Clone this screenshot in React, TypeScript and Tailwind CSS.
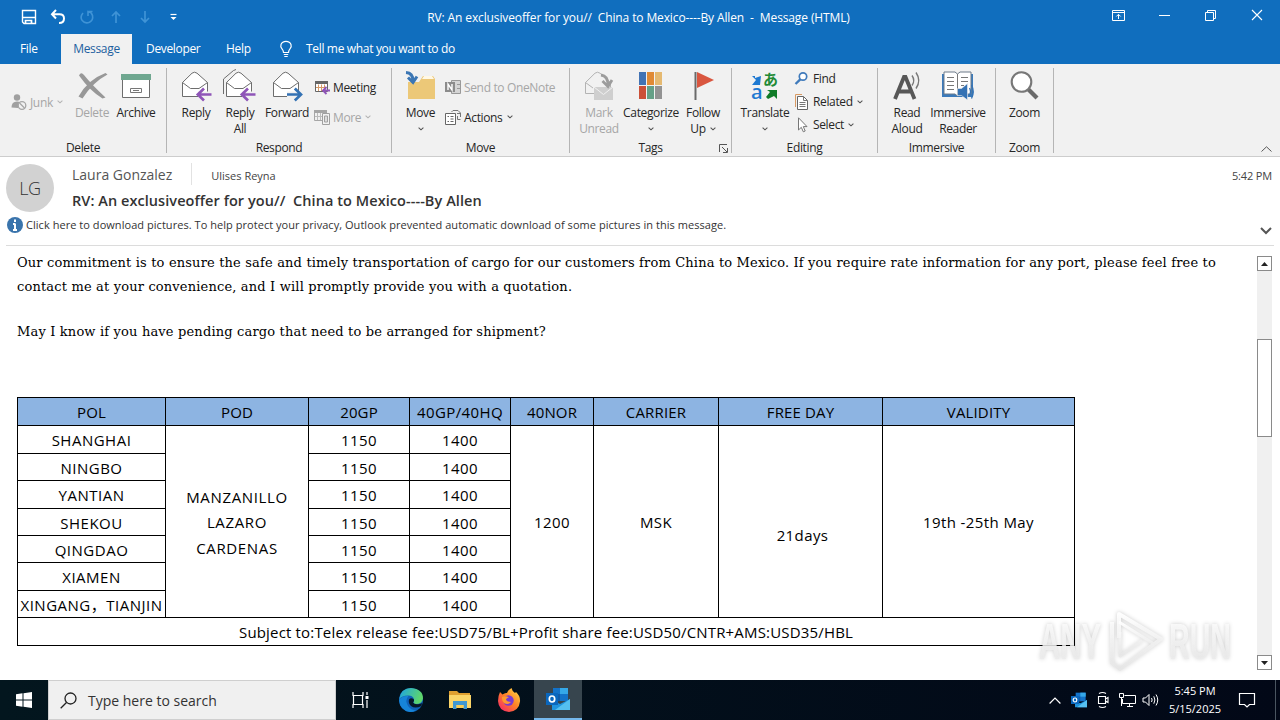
import clsx from 'clsx';
import type { ReactNode } from 'react';

interface BoxProps {
  children: ReactNode;
  className?: string;
}

function Svg({ w, h, children }: { w: number; h: number; children: ReactNode }) {
  return (
    <svg width={w} height={h} viewBox={`0 0 ${w} ${h}`} fill="none" className="block shrink-0 overflow-visible">
      {children}
    </svg>
  );
}

function Caret({ disabled }: { disabled?: boolean }) {
  return (
    <Svg w={6} h={4}>
      <path d="M0.6 0.6L3 2.8L5.4 0.6" stroke={disabled ? '#b4b4b4' : '#555'} strokeWidth="1.1" />
    </Svg>
  );
}

/* ---------- ribbon icons ---------- */

function Envelope() {
  return (
    <>
      <path d="M2.5 12.5L12 3.2Q14.5 1.2 17 3.2L27.5 12.5V26.5H2.5Z" fill="#fff" stroke="#6d6d6d" />
      <path d="M2.5 12.5L10.5 18.5H19L27.5 12.5" stroke="#6d6d6d" />
    </>
  );
}

function ArrowLeft() {
  return (
    <>
      <path d="M32 24.5H18" stroke="#f1f1f1" strokeWidth="6" />
      <path d="M31.5 24.5H18M24 18.5L17.8 24.5L24 30.5" stroke="#8f55b8" strokeWidth="2.7" />
    </>
  );
}

function ReplyIcon() {
  return <Svg w={32} h={32}><Envelope /><ArrowLeft /></Svg>;
}

function ReplyAllIcon() {
  return (
    <Svg w={32} h={32}>
      <path d="M-0.5 24V9L9.500 0.5L12 -0.5" stroke="#6d6d6d" />
      <Envelope />
      <ArrowLeft />
    </Svg>
  );
}

function ForwardIcon() {
  return (
    <Svg w={32} h={32}>
      <Envelope />
      <path d="M16 24.5H30" stroke="#f1f1f1" strokeWidth="6" />
      <path d="M16 24.5H30M23.8 18.5L30 24.5L23.8 30.5" stroke="#3472b4" strokeWidth="2.7" />
    </Svg>
  );
}

function DeleteIcon() {
  return (
    <Svg w={32} h={32}>
      <path d="M3 5.5Q5 1.5 8 5Q16 15 29.5 27.5L26.5 28.5Q14 21 3 5.5Z" fill="#989898" />
      <path d="M31.500 4.500Q17 12 6.500 28.500L2.500 26.500Q12 9.500 29.500 3Z" fill="#989898" />
    </Svg>
  );
}

function ArchiveIcon() {
  return (
    <Svg w={32} h={32}>
      <path d="M2.5 9V27.5H29.5V9" fill="#fff" stroke="#6d6d6d" />
      <path d="M1 4H31V10H1Z" fill="#6fa790" />
      <path d="M10.5 18.5H21.5V22.5H10.5ZM13 20.5H19" stroke="#777" />
    </Svg>
  );
}

function JunkIcon() {
  return (
    <Svg w={16} h={16}>
      <circle cx="6" cy="3.5" r="3.2" fill="#a0a0a0" />
      <path d="M0.5 13.5Q0.5 7.5 6 7.5Q8 7.5 9 8.4L7 14Z" fill="#a0a0a0" />
      <circle cx="11" cy="11.5" r="3.8" fill="#f1f1f1" stroke="#a6a6a6" strokeWidth="1.3" />
      <path d="M8.5 9L13.5 14" stroke="#a6a6a6" strokeWidth="1.3" />
    </Svg>
  );
}

function MeetingIcon() {
  return (
    <Svg w={16} h={16}>
      <path d="M1.5 2.5H13.5V12.5H1.5Z" fill="#fff" stroke="#666" />
      <path d="M1 2H14V5H1Z" fill="#666" />
      <path d="M4.5 5.5V12M7.5 5.5V12M10.5 5.5V9M2 8.5H10" stroke="#d79a68" />
      <path d="M16 11.5H9.5M12.5 8L9 11.5L12.5 15" stroke="#8f55b8" strokeWidth="1.9" />
    </Svg>
  );
}

function MoreIcon() {
  return (
    <Svg w={16} h={16}>
      <path d="M0.5 1.5H12.5V11.5H0.5Z" stroke="#a6a6a6" />
      <path d="M0 1H13V4H0Z" fill="#a6a6a6" />
      <path d="M3.5 4V11M6.5 4V11M1 7.5H8" stroke="#bcbcbc" />
      <path d="M8.5 4.5H15.5V15.5H8.5Z" fill="#f1f1f1" stroke="#a0a0a0" />
      <path d="M10.5 7H13.5V13H10.5Z" fill="#ddd" stroke="#a0a0a0" />
    </Svg>
  );
}

function MoveIcon() {
  return (
    <Svg w={32} h={32}>
      <path d="M3 12H14L18 6H28L30 9V29H3Z" fill="#ecc878" />
      <path d="M19 6H27L29 9H17Z" fill="#fff8e6" />
      <path d="M1 2.5Q8 3 8 11M3 7.5L8 12.5L12 6.5" stroke="#3b76b4" strokeWidth="3" />
    </Svg>
  );
}

function OneNoteIcon() {
  return (
    <Svg w={16} h={16}>
      <path d="M6.5 1.5H15.5V14.5H6.5Z" fill="#d5d5d5" stroke="#999" />
      <path d="M12 5.5H15M12 9.5H15" stroke="#999" />
      <path d="M0 3H10V13H0Z" fill="#8c8c8c" />
      <path d="M3 11V5L7 11V5" stroke="#fff" strokeWidth="1.4" />
    </Svg>
  );
}

function ActionsIcon() {
  return (
    <Svg w={16} h={16}>
      <path d="M0.5 4.5H10.5V15.5H0.5Z" fill="#fff" stroke="#666" />
      <path d="M2.5 7.5H4M2.5 12.5H4M5.5 7.5H8.5M5.5 10H8.5M5.5 12.5H8.5" stroke="#666" />
      <path d="M6.5 3L8 1.5H13L15.5 4V8" stroke="#777" />
      <path d="M12.5 7V10.5H15.5M12 4.5H15" stroke="#777" />
    </Svg>
  );
}

function MarkUnreadIcon() {
  return (
    <Svg w={32} h={32}>
      <path d="M2.5 12.5L12 3.2Q14.5 1.2 17 3.2L27.5 12.5V23.5H2.5Z" stroke="#b3b3b3" />
      <path d="M2.5 12.5L10 18" stroke="#b3b3b3" />
      <path d="M11 17H30V30H11Z" fill="#cfcfcf" />
      <path d="M11 17L20.5 24.5L30 17" stroke="#f1f1f1" />
      <path d="M18 5Q25 6 25 15M19.5 11L25 16.5L29 10" stroke="#9c9c9c" strokeWidth="2.8" />
    </Svg>
  );
}

function CategorizeIcon() {
  return (
    <Svg w={32} h={32}>
      <path d="M4 2H11V15H4Z" fill="#4273b4" />
      <path d="M12 2H19V15H12Z" fill="#e08a35" />
      <path d="M20 2H27V15H20Z" fill="#e5b971" />
      <path d="M4 16H11V29H4Z" fill="#cb5038" />
      <path d="M12 16H19V29H12Z" fill="#65a087" />
      <path d="M20 16H27V29H20Z" fill="#939393" />
    </Svg>
  );
}

function FlagIcon() {
  return (
    <Svg w={32} h={32}>
      <path d="M8.5 2V30" stroke="#6a6a6a" strokeWidth="2" />
      <path d="M10 2L27 10L10 18Z" fill="#d9563f" />
    </Svg>
  );
}

function TranslateIcon() {
  return (
    <Svg w={32} h={32}>
      <path d="M3 6H6V8L12 6L11 15H3L7 10Z" fill="#1e79d2" />
      <text x="2" y="29" fontSize="20" fill="#1e79d2" fontFamily="Open Sans" fontWeight="600">a</text>
      <text x="14" y="15" fontSize="15" fill="#218a35" fontFamily="Noto Sans CJK JP" fontWeight="700">あ</text>
      <path d="M18 20H28V29L25 26L19 29L17 27L21 22Z" fill="#107c28" />
    </Svg>
  );
}

function FindIcon() {
  return (
    <Svg w={16} h={16}>
      <circle cx="9" cy="5.5" r="3.7" fill="#fff" stroke="#3f7abb" strokeWidth="1.7" />
      <path d="M6.3 8.3L1.5 13" stroke="#3f7abb" strokeWidth="2.4" />
    </Svg>
  );
}

function RelatedIcon() {
  return (
    <Svg w={16} h={16}>
      <path d="M1.5 13V0.5H8" stroke="#d99a63" />
      <path d="M3.5 2.5H9.5L13.5 6.5V15.5H3.5Z" fill="#fff" stroke="#666" />
      <path d="M9.5 2.5V6.5H13.5M5.5 8.5H11.5M5.5 10.5H11.5M5.5 12.5H11.5" stroke="#777" />
    </Svg>
  );
}

function SelectIcon() {
  return (
    <Svg w={16} h={16}>
      <path d="M4.5 0.8V13L7.3 10.3L9.3 14.8L11.2 14L9.3 9.6H13Z" fill="#fff" stroke="#777" />
    </Svg>
  );
}

function ReadAloudIcon() {
  return (
    <Svg w={32} h={32}>
      <path d="M4 29L13 7H14.5L23.5 29M7.5 21.5H20" stroke="#575757" strokeWidth="3.8" />
      <path d="M21 5.5Q24.5 10.5 21 15.5M25 2.5Q30.5 10.5 25 18.5" stroke="#777" strokeWidth="1.4" />
    </Svg>
  );
}

function ReaderIcon() {
  return (
    <Svg w={32} h={32}>
      <path d="M0 4H31V27H0Z" fill="#3b7abb" />
      <path d="M2 2H13L15.5 4L18 2H29V24H18L15.5 26L13 24H2Z" fill="#fff" stroke="#6c7b8a" />
      <path d="M15.5 4V25M5 7.5H12M5 11.5H12M5 15.5H12M5 19.5H12M19 7.5H26M19 11.5H26M19 15.5H22" stroke="#777" />
      <path d="M15.5 18.5H19.5L25.5 13.5V30L19.5 25.5H15.5Z" fill="#3472b4" stroke="#f1f1f1" strokeWidth="0.6" />
      <path d="M27.5 18Q29.5 21.5 27.5 25.5M29.5 15Q33 21.5 29.5 28.5" stroke="#3472b4" strokeWidth="1.3" />
    </Svg>
  );
}

function ZoomIcon() {
  return (
    <Svg w={32} h={32}>
      <path d="M19.5 19.5L28 28" stroke="#6a6a6a" strokeWidth="4.2" />
      <circle cx="12.500" cy="12" r="9.800" fill="#fff" stroke="#777" strokeWidth="2.1" />
    </Svg>
  );
}

/* ---------- ribbon parts ---------- */

interface BigProps {
  icon: ReactNode;
  lines: string[];
  className: string;
  caret?: boolean;
  inlineCaret?: boolean;
  disabled?: boolean;
}

function BigButton({ icon, lines, className, caret, inlineCaret, disabled }: BigProps) {
  return (
    <button className={clsx('flex shrink-0 flex-col items-center pt-1.5', disabled && 'text-[#a6a6a6]', className)}>
      {icon}
      <span className="mt-[3px] flex flex-col items-center leading-4 whitespace-nowrap">
        {lines.map((line, i) => (
          <span key={line} className="flex items-center gap-1">
            {line}
            {inlineCaret && i === lines.length - 1 && <Caret />}
          </span>
        ))}
      </span>
      {caret && <span className="mt-1.5"><Caret /></span>}
    </button>
  );
}

interface SmallProps {
  icon: ReactNode;
  label: string;
  className: string;
  caret?: boolean;
  disabled?: boolean;
}

function SmallButton({ icon, label, className, caret, disabled }: SmallProps) {
  return (
    <button className={clsx('flex items-center gap-[3px] whitespace-nowrap', disabled && 'text-[#a6a6a6]', className)}>
      {icon}
      <span className="pt-px">{label}</span>
      {caret && <span className="ml-px"><Caret disabled={disabled} /></span>}
    </button>
  );
}

function Group({ label, className, children, launcher }: BoxProps & { label: string; launcher?: boolean }) {
  return (
    <div className="flex shrink-0">
      <div className={clsx('relative flex flex-col', className)}>
        <div className="flex h-[76px]">{children}</div>
        <div className="text-center leading-[17px]">{label}</div>
        {launcher && (
          <span className="absolute right-[3px] bottom-[3px]">
            <Svg w={9} h={9}>
              <path d="M0.5 8V0.5H8M3 3L8 8M8.5 4V8.5H4" stroke="#555" />
            </Svg>
          </span>
        )}
      </div>
      <div className="mt-1 h-[85px] w-px bg-[#b5b5b5]" />
    </div>
  );
}

function Ribbon() {
  return (
    <div className="flex h-[93px] border-b border-[#cdcdcd] bg-[#f1f1f1] text-xs tracking-[-0.35px] text-[#262626]">
      <Group label="Delete" className="w-[166px]">
        <SmallButton icon={<JunkIcon />} label="Junk" className="mt-[23px] ml-[11px] h-[30px] w-[61px]" caret disabled />
        <BigButton icon={<DeleteIcon />} lines={['Delete']} className="w-10" disabled />
        <BigButton icon={<ArchiveIcon />} lines={['Archive']} className="w-12" />
      </Group>
      <Group label="Respond" className="w-[224px]">
        <BigButton icon={<ReplyIcon />} lines={['Reply']} className="ml-[7px] w-11" />
        <BigButton icon={<ReplyAllIcon />} lines={['Reply', 'All']} className="w-11" />
        <BigButton icon={<ForwardIcon />} lines={['Forward']} className="w-[50px]" />
        <div className="flex flex-col pt-2 pl-0.5">
          <SmallButton icon={<MeetingIcon />} label="Meeting" className="h-[30px]" />
          <SmallButton icon={<MoreIcon />} label="More" className="h-[30px]" caret disabled />
        </div>
      </Group>
      <Group label="Move" className="w-[177px]">
        <BigButton icon={<MoveIcon />} lines={['Move']} className="ml-[5px] w-[47px]" caret />
        <div className="flex flex-col pt-2 pl-px">
          <SmallButton icon={<OneNoteIcon />} label="Send to OneNote" className="h-[30px]" disabled />
          <SmallButton icon={<ActionsIcon />} label="Actions" className="h-[30px]" caret />
        </div>
      </Group>
      <Group label="Tags" className="w-[161px]" launcher>
        <BigButton icon={<MarkUnreadIcon />} lines={['Mark', 'Unread']} className="ml-[7px] w-11" disabled />
        <BigButton icon={<CategorizeIcon />} lines={['Categorize']} className="w-[60px]" caret />
        <BigButton icon={<FlagIcon />} lines={['Follow', 'Up']} className="w-11" inlineCaret />
      </Group>
      <Group label="Editing" className="w-[145px]">
        <BigButton icon={<TranslateIcon />} lines={['Translate']} className="ml-[7px] w-[52px]" caret />
        <div className="flex flex-col pt-[3px] pl-[3px]">
          <SmallButton icon={<FindIcon />} label="Find" className="h-[23px]" />
          <SmallButton icon={<RelatedIcon />} label="Related" className="h-[23px]" caret />
          <SmallButton icon={<SelectIcon />} label="Select" className="h-[23px]" caret />
        </div>
      </Group>
      <Group label="Immersive" className="w-[117px]">
        <BigButton icon={<ReadAloudIcon />} lines={['Read', 'Aloud']} className="ml-1.5 w-[46px]" />
        <BigButton icon={<ReaderIcon />} lines={['Immersive', 'Reader']} className="w-14" />
      </Group>
      <Group label="Zoom" className="w-[57px]">
        <BigButton icon={<ZoomIcon />} lines={['Zoom']} className="w-[57px]" />
      </Group>
      <div className="mr-2 mb-1 ml-auto self-end">
        <Svg w={11} h={6}>
          <path d="M0.5 5.5L5.5 0.8L10.5 5.5" stroke="#555" />
        </Svg>
      </div>
    </div>
  );
}

/* ---------- title bar ---------- */

function TitleBar() {
  return (
    <div className="relative flex h-[34px] items-center justify-between text-white">
      <div className="flex items-center gap-[13px] pl-[21px]">
        <Svg w={16} h={16}>
          <path d="M1.5 1.5H14.5V14.5H3L1.500 13Z" stroke="#fff" strokeWidth="1.4" />
          <path d="M2 8.500H14M4.500 14V11.500H10.500V14" stroke="#fff" strokeWidth="1.700" />
        </Svg>
        <Svg w={16} h={16}>
          <path d="M6 1L2 5.3L6 9.5M2.5 5.3H9.5Q14 5.3 14 9.5Q14 14 9 14" stroke="#fff" strokeWidth="2" />
        </Svg>
        <Svg w={16} h={16}>
          <path d="M4 4Q0.7 8 3.2 11.6Q6 15 10.5 13.3Q14.5 11 13.5 6.5Q12.5 3 9 2.5V7M9 2.5H13.5" stroke="#3f93d6" strokeWidth="1.6" />
        </Svg>
        <Svg w={16} h={16}>
          <path d="M8 14V3M4 7L8 3L12 7" stroke="#3f93d6" strokeWidth="1.7" />
        </Svg>
        <Svg w={16} h={16}>
          <path d="M8 2V13M4 9L8 13L12 9" stroke="#3f93d6" strokeWidth="1.7" />
        </Svg>
        <Svg w={16} h={16}>
          <path d="M4.500 5.5H10.500" stroke="#fff" strokeWidth="1.2" />
          <path d="M4.500 8H10.500L7.500 11Z" fill="#fff" />
        </Svg>
      </div>
      <div className="absolute inset-x-0 pt-px pr-[3px] text-center text-xs tracking-[-0.12px] whitespace-pre">
        {'RV: An exclusiveoffer for you//  China to Mexico----By Allen  -  Message (HTML)'}
      </div>
      <div className="flex items-center pr-[17px] pb-1">
        <Svg w={14} h={11}>
          <path d="M1.5 0.5H13.5V10.5H1.5ZM1.5 2.5H13.5M7.5 9V4.5M5.3 6.5L7.5 4.3L9.7 6.5" stroke="#fff" />
        </Svg>
        <div className="ml-[34px] h-px w-[11px] bg-white" />
        <span className="ml-[35px]">
          <Svg w={11} h={11}>
            <path d="M0.5 2.5H8.5V10.5H0.5ZM2.5 2.5V0.5H10.5V8.5H8.5" stroke="#fff" />
          </Svg>
        </span>
        <span className="ml-[35px]">
          <Svg w={12} h={12}>
            <path d="M1 1L11 11M11 1L1 11" stroke="#fff" strokeWidth="1.1" />
          </Svg>
        </span>
      </div>
    </div>
  );
}

function Tabs() {
  return (
    <div className="flex h-[30px] items-center text-xs tracking-[-0.33px] text-white">
      <span className="w-[61px] pl-5">File</span>
      <span className="flex h-full w-[71px] items-center justify-center bg-[#f1f1f1] text-[#1d5f9f]">Message</span>
      <span className="w-[94px] pl-3.5">Developer</span>
      <span className="w-[53px]">Help</span>
      <Svg w={14} h={18}>
        <path d="M4.5 12.5Q4.5 10.5 3 8.8Q1.2 6.8 2 4.5Q3.2 1.3 7 1.3Q10.8 1.3 12 4.5Q12.8 6.8 11 8.8Q9.5 10.5 9.5 12.5ZM4.8 14.5H9.2M5.3 16.5H8.7" stroke="#fff" strokeWidth="1.2" />
      </Svg>
      <span className="ml-[13px]">Tell me what you want to do</span>
    </div>
  );
}

/* ---------- message ---------- */

function MessageHeader() {
  return (
    <div className="ml-1.5 flex h-[89px] w-[1268px] flex-col border-b border-[#dcdcdc] text-[#444]">
      <div className="flex h-[58px]">
        <div className="mt-[7px] flex size-12 shrink-0 items-center justify-center rounded-full bg-[#d2d2d2] text-lg font-light tracking-tight text-[#333]">
          LG
        </div>
        <div className="ml-[18px] flex flex-col">
          <div className="flex h-[34px] items-center">
            <span className="pt-0.5 text-sm text-[#555]">Laura Gonzalez</span>
            <span className="mx-[19px] h-[22px] w-px bg-[#e2e2e2]" />
            <span className="pt-1 text-[11px]">Ulises Reyna</span>
          </div>
          <div className="text-[14.5px] leading-5 font-semibold tracking-[0.06px] whitespace-pre text-[#333]">
            {'RV: An exclusiveoffer for you//  China to Mexico----By Allen'}
          </div>
        </div>
        <span className="mt-[11px] mr-0.5 ml-auto text-[11px] tracking-[-0.15px]">5:42 PM</span>
      </div>
      <div className="flex items-center">
        <Svg w={18} h={18}>
          <circle cx="9" cy="9" r="8" fill="#3a74ac" />
          <path d="M9 3.5V6M9 7.5V14M7 8H9M7 14H11" stroke="#fff" strokeWidth="2" />
        </Svg>
        <span className="ml-0.5 text-[11px] tracking-[0.045px] text-[#333]">
          Click here to download pictures. To help protect your privacy, Outlook prevented automatic download of some pictures in this message.
        </span>
        <span className="mt-3 mr-0.5 ml-auto">
          <Svg w={12} h={8}>
            <path d="M1 1L6 6L11 1" stroke="#555" strokeWidth="2" />
          </Svg>
        </span>
      </div>
    </div>
  );
}

const HEADS = ['POL', 'POD', '20GP', '40GP/40HQ', '40NOR', 'CARRIER', 'FREE DAY', 'VALIDITY'];
const PORTS: [string, string][] = [
  ['SHANGHAI', 'h-7'],
  ['NINGBO', 'h-[27px]'],
  ['YANTIAN', 'h-7'],
  ['SHEKOU', 'h-[27px]'],
  ['QINGDAO', 'h-[27px]'],
  ['XIAMEN', 'h-7'],
  ['XINGANG，TIANJIN', 'h-[27px]'],
];

function Cell({ children, className, rows }: BoxProps & { rows?: number }) {
  return (
    <td rowSpan={rows} className={clsx('border border-black p-0 text-center', className)}>
      {children}
    </td>
  );
}

function RateTable() {
  return (
    <table className="w-[1058px] table-fixed border-collapse font-['Open_Sans','Noto_Sans_CJK_SC',sans-serif] text-[15px] leading-5 tracking-[0.4px] whitespace-nowrap">
      <colgroup>
        <col className="w-[148px]" />
        <col className="w-[143px]" />
        <col className="w-[101px]" />
        <col className="w-[101px]" />
        <col className="w-[83px]" />
        <col className="w-[125px]" />
        <col className="w-[164px]" />
        <col className="w-[192px]" />
      </colgroup>
      <tbody>
        <tr className="h-7 bg-[#8db4e2]">
          {HEADS.map(h => <Cell key={h} className={h === '40GP/40HQ' ? '' : 'tracking-[0.15px]'}>{h}</Cell>)}
        </tr>
        {PORTS.map(([port, height], i) => (
          <tr key={port} className={height}>
            <Cell className="pt-px tracking-[0.5px]">{port}</Cell>
            {i === 0 && (
              <Cell rows={7} className="pt-[3px] leading-[25.5px] tracking-[0.65px]">
                MANZANILLO<br />LAZARO<br />CARDENAS
              </Cell>
            )}
            <Cell className="pt-px">1150</Cell>
            <Cell className="pt-px">1400</Cell>
            {i === 0 && (
              <>
                <Cell rows={7}>1200</Cell>
                <Cell rows={7}>MSK</Cell>
                <Cell rows={7} className="pt-[27px] pl-1">21days</Cell>
                <Cell rows={7}>19th -25th May</Cell>
              </>
            )}
          </tr>
        ))}
        <tr className="h-7">
          <td colSpan={8} className="border border-black p-0 text-center tracking-[0.17px]">
            Subject to:Telex release fee:USD75/BL+Profit share fee:USD50/CNTR+AMS:USD35/HBL
          </td>
        </tr>
      </tbody>
    </table>
  );
}

function ScrollButton({ down }: { down?: boolean }) {
  return (
    <div className="flex size-[15px] items-center justify-center border border-[#8a8a8a] bg-white">
      <Svg w={7} h={4}>
        <path d={down ? 'M0 0H7L3.5 4Z' : 'M0 4H7L3.5 0Z'} fill="#222" />
      </Svg>
    </div>
  );
}

function Watermark() {
  return (
    <div className="absolute top-[362px] left-[1036px]">
      <svg width="200" height="68" viewBox="0 0 200 68" className="block overflow-visible drop-shadow-[0_0_2px_rgba(0,0,0,0.22)]">
        <defs>
          <linearGradient id="wm" x1="0" y1="0" x2="0" y2="1">
            <stop offset="0" stopColor="#fff" stopOpacity="0.95" />
            <stop offset="1" stopColor="#e6e6e6" stopOpacity="0.75" />
          </linearGradient>
        </defs>
        <g fill="url(#wm)" fontFamily="Liberation Sans" fontWeight="700" fontSize="50">
          <text x="3" y="51" textLength="62" lengthAdjust="spacingAndGlyphs">ANY</text>
          <text x="133" y="51" textLength="62" lengthAdjust="spacingAndGlyphs">RUN</text>
        </g>
        <g fill="none" stroke="url(#wm)" strokeWidth="4" strokeLinejoin="round">
          <path d="M83 30V6L125 31L84 61L76 55V14" />
          <path d="M83 14L118 36M84 24V48L106 33" strokeWidth="3" />
        </g>
      </svg>
    </div>
  );
}

function MessageBody() {
  return (
    <div className="relative flex h-[434px]">
      <div className="w-[1257px] pl-[17px] font-['DejaVu_Serif',serif] text-[13px] tracking-[0.165px] whitespace-nowrap text-black">
        <p className="mt-[5px] h-6 leading-6">
          Our commitment is to ensure the safe and timely transportation of cargo for our customers from China to Mexico. If you require rate information for any port, please feel free to
        </p>
        <p className="h-6 leading-6">contact me at your convenience, and I will promptly provide you with a quotation.</p>
        <p className="mt-[21px] mb-[53px] h-6 leading-6">May I know if you have pending cargo that need to be arranged for shipment?</p>
        <RateTable />
      </div>
      <div className="mt-2.5 flex h-[414px] w-[15px] flex-col bg-[#f0f0f0]">
        <ScrollButton />
        <div className="mt-[68px] mb-auto h-[98px] border border-[#8a8a8a] bg-white" />
        <ScrollButton down />
      </div>
      <Watermark />
    </div>
  );
}

/* ---------- taskbar ---------- */

function OutlookLogo({ size }: { size: number }) {
  return (
    <svg width={size} height={size} viewBox="0 0 24 24" className="block">
      <path d="M7 1H22V14H7Z" fill="#1372c8" />
      <path d="M14 1H22V7H14Z" fill="#35a8e8" />
      <path d="M7 7H14V14H7Z" fill="#0f5ba8" />
      <path d="M6 13L14 17L24 12V23H6Z" fill="#1f93dd" />
      <path d="M24 12V23H9Z" fill="#55c0f0" />
      <path d="M0 6H12V18H0Z" fill="#0a67bd" />
      <ellipse cx="6" cy="12" rx="2.7" ry="3" fill="none" stroke="#fff" strokeWidth="1.7" />
    </svg>
  );
}

function EdgeLogo() {
  return (
    <svg width="24" height="24" viewBox="0 0 24 24" className="block">
      <defs>
        <linearGradient id="edgeTop" x1="0" y1="0" x2="1" y2="0.3">
          <stop offset="0" stopColor="#1ba3e6" />
          <stop offset="1" stopColor="#5ed66b" />
        </linearGradient>
      </defs>
      <circle cx="12" cy="12" r="12" fill="#0f62b8" />
      <path d="M0.2 11Q2 0 12 0Q24 1 24 10.5Q23 16 17 16Q13.500 15.500 15 13Q15.500 8 10 7.500Q3.500 7 0.200 11Z" fill="url(#edgeTop)" />
      <path d="M0 12Q3 7.500 9.500 8Q5.500 12 9 18Q12 22 17 22.500Q14 24 11 24Q1 22.500 0 12Z" fill="#1684d8" />
      <path d="M10 11.500Q12 9 15 11.500Q15.500 13 14 14.500Q15 16.500 19 16.200Q22 16 23 15L22.500 18Q16 21 12 18Q9 15 10 11.500Z" fill="#06182a" />
    </svg>
  );
}

function ExplorerLogo() {
  return (
    <svg width="22" height="20" viewBox="0 0 22 20" className="block">
      <path d="M0 1H8L10 3H21V8H0Z" fill="#e0a030" />
      <path d="M0 5H22V18H0Z" fill="#fbd568" />
      <path d="M4 11H18V19H14.500V15H7.500V19H4Z" fill="#3f98d2" />
      <path d="M7.500 15H14.500V18H7.500Z" fill="#f9cd55" />
    </svg>
  );
}

function FirefoxLogo() {
  return (
    <svg width="24" height="24" viewBox="0 0 24 24" className="block">
      <defs>
        <linearGradient id="fox" x1="1" y1="0" x2="0.100" y2="1">
          <stop offset="0" stopColor="#ffe34a" />
          <stop offset="0.500" stopColor="#ff8226" />
          <stop offset="1" stopColor="#f5246b" />
        </linearGradient>
      </defs>
      <path d="M3 4L5.500 6.500Q8 4.500 10 5Q11 2 14.500 0Q15 3 18 5L19 4Q23.500 8 23 13.500Q22 23 12 24Q1.500 23 1 13Q1 8 3 4Z" fill="url(#fox)" />
      <circle cx="11.500" cy="12.500" r="5.200" fill="#7a3bd0" />
      <path d="M5 9Q9 7.500 12 9.500Q9 10 9 12Q10 14 14 14Q11 17.500 7 15Q4.500 12 5 9Z" fill="#ff9a2e" />
    </svg>
  );
}

function Taskbar() {
  return (
    <div className="flex h-10 items-center bg-linear-to-r from-[#03161e] to-[#020817] text-white">
      <div className="flex w-12 justify-center">
        <Svg w={16} h={16}>
          <path d="M0 2.200L6.500 1.300V7.500H0ZM7.500 1.200L16 0V7.500H7.500ZM0 8.500H6.500V14.700L0 13.800ZM7.500 8.500H16V16L7.500 14.800Z" fill="#fff" />
        </Svg>
      </div>
      <div className="flex h-full w-72 items-center border border-[#cfcfcf] bg-[#f0f0f0] pl-[11px] text-[#333]">
        <Svg w={17} h={17}>
          <circle cx="10.500" cy="6.500" r="5.500" stroke="#222" strokeWidth="1.300" />
          <path d="M6.500 10.500L0.700 16.300" stroke="#222" strokeWidth="1.300" />
        </Svg>
        <span className="ml-[11px] pt-px text-sm">Type here to search</span>
      </div>
      <div className="flex w-12 justify-center">
        <Svg w={17} h={16}>
          <path d="M1 0V3.500H11V0M1 16V12.500H11V16M1.500 3.500V12.500M10.500 3.500V12.500M15 0V3M15 8V16" stroke="#fff" strokeWidth="1.200" />
          <path d="M13.500 4H16.500V7H13.500Z" fill="#fff" />
        </Svg>
      </div>
      <div className="ml-[3px] flex w-12 justify-center"><EdgeLogo /></div>
      <div className="ml-px flex w-12 justify-center"><ExplorerLogo /></div>
      <div className="ml-px flex w-12 justify-center"><FirefoxLogo /></div>
      <div className="ml-px flex h-full w-12 items-center justify-center border-b-2 border-[#76b9ed] bg-[#37454e]">
        <OutlookLogo size={24} />
      </div>
      <div className="ml-auto flex items-center">
        <Svg w={12} h={7}>
          <path d="M0.600 6.500L6 1L11.400 6.500" stroke="#fff" strokeWidth="1.200" />
        </Svg>
        <span className="ml-2.5"><OutlookLogo size={16} /></span>
        <span className="ml-2">
          <Svg w={16} h={16}>
            <path d="M3.500 4.500H10.500V11.500H3.500ZM10.500 7L13 5.500V10.500L10.500 9M4 1.500Q7.500 -0.500 11 1.500M4 14.500Q7.500 16.500 11 14.500" stroke="#fff" strokeWidth="1.100" />
          </Svg>
        </span>
        <span className="ml-2">
          <Svg w={17} h={16}>
            <path d="M5.500 3.500H16.500V11.500H3.500V7M8 14.500H14M10.500 12V14M0.500 1.500H4.500V5.500H0.500ZM2.500 5.500V14" stroke="#fff" />
          </Svg>
        </span>
        <span className="ml-1.5">
          <Svg w={18} h={16}>
            <path d="M1 6H3.500L7 2.500V13.500L3.500 10H1Z" stroke="#fff" />
            <path d="M9.500 6Q10.800 8 9.500 10M11.800 4.300Q14 8 11.800 11.700M14 2.500Q17.500 8 14 13.500" stroke="#fff" />
          </Svg>
        </span>
        <div className="ml-2 flex w-[54px] flex-col items-center text-[11px] leading-[18px]">
          <span>5:45 PM</span>
          <span>5/15/2025</span>
        </div>
        <span className="ml-[17px]">
          <Svg w={16} h={16}>
            <path d="M0.500 1.500H15.500V12.500H10.500L8 15L5.500 12.500H0.500Z" stroke="#fff" strokeWidth="1.200" />
          </Svg>
        </span>
        <span className="mr-1 ml-5 h-10 w-px bg-[#4a5560]" />
      </div>
    </div>
  );
}

export default function App() {
  return (
    <div className="flex h-[720px] w-[1280px] flex-col overflow-hidden bg-white font-['Open_Sans','Noto_Sans',sans-serif]">
      <header className="bg-[#106ebe]">
        <TitleBar />
        <Tabs />
      </header>
      <Ribbon />
      <MessageHeader />
      <MessageBody />
      <Taskbar />
    </div>
  );
}
